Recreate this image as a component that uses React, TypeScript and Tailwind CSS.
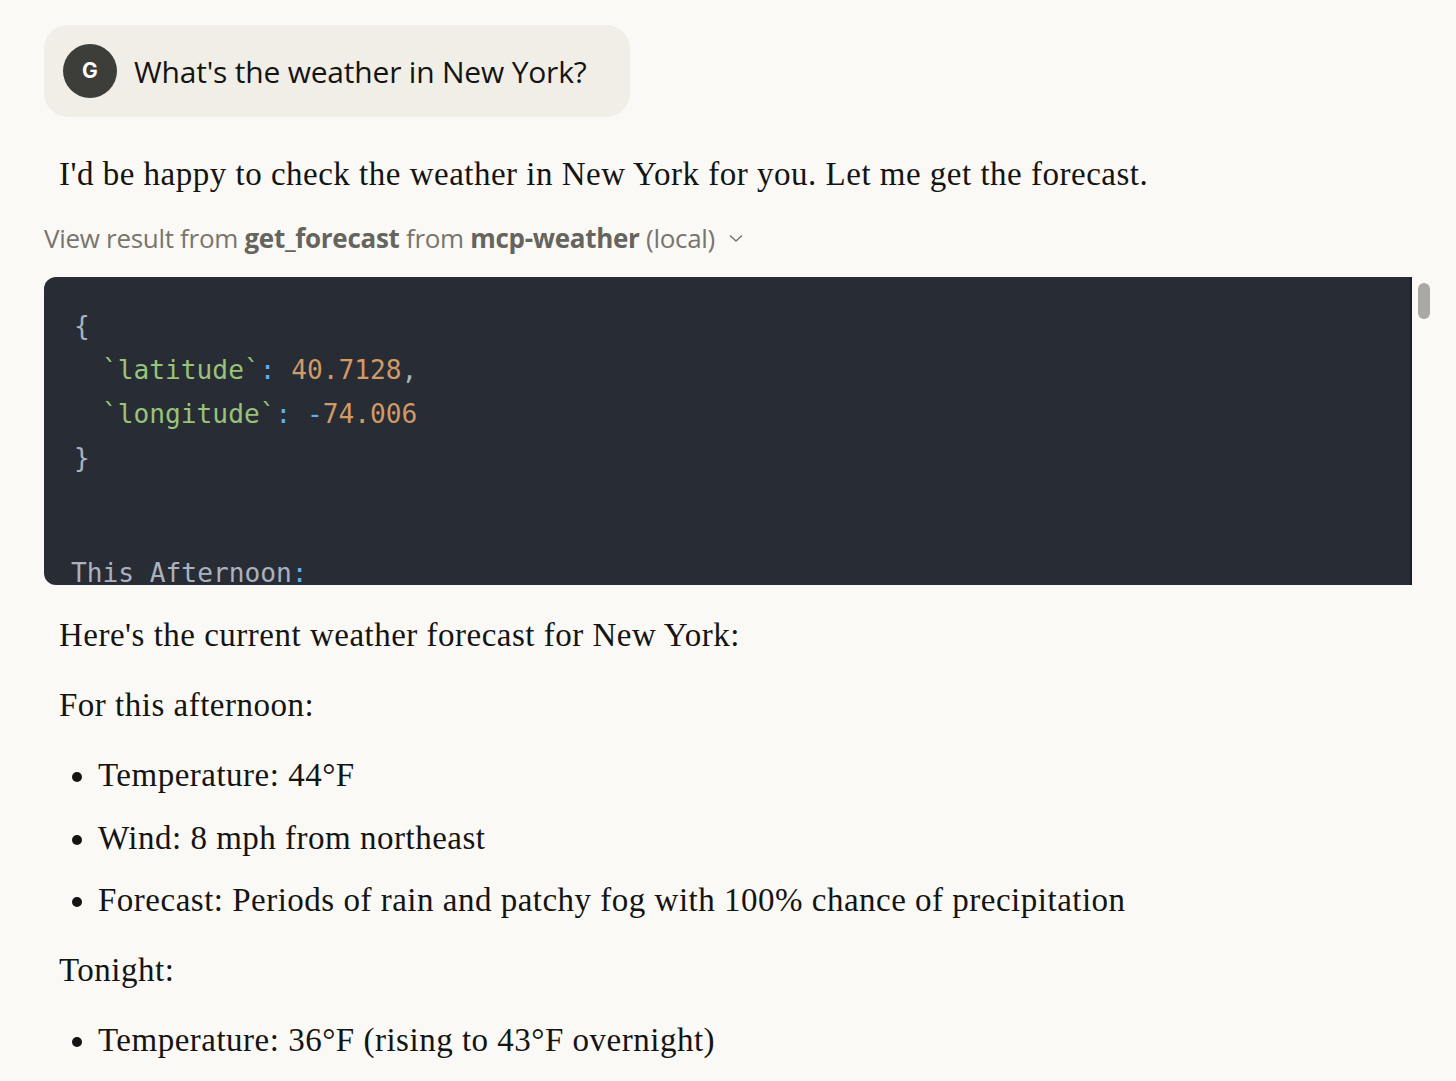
import React from "react";

const serif = { fontFamily: '"Liberation Serif", "DejaVu Serif", serif', letterSpacing: "0.5px" };

export default function App() {
  return (
    <div className="min-h-[1081px] w-full bg-[#faf9f5] pl-[44px] pr-[26px] pt-[25px]" style={serif}>
      {/* user bubble */}
      <div className="flex h-[92px] w-[586px] items-center gap-[17px] rounded-[24px] bg-[#f0eee6] pl-[19px]" style={{ letterSpacing: 0 }}>
        <div
          className="flex h-[54px] w-[54px] items-center justify-center rounded-full bg-[#3d3d3a] text-[21px] font-bold text-white"
          style={{ fontFamily: 'Inter, "Noto Sans", sans-serif' }}
        >
          G
        </div>
        <div
          className="text-[30px] text-[#141413]"
          style={{ fontFamily: '"Open Sans", Inter, sans-serif', letterSpacing: "-0.2px" }}
        >
          What's the weather in New York?
        </div>
      </div>

      <p className="mt-[37px] pl-[15px] text-[33px] leading-[40px] text-[#141413]">
        I'd be happy to check the weather in New York for you. Let me get the forecast.
      </p>

      <div
        className="mt-[29px] flex items-center gap-[12px] text-[26px] leading-[30px] text-[#77756e]"
        style={{ fontFamily: '"Open Sans", Inter, sans-serif', letterSpacing: "-0.3px" }}
      >
        <span>
          View result from <span className="font-bold text-[#66645e]">get_forecast</span> from{" "}
          <span className="font-bold text-[#66645e]">mcp-weather</span> (local)
        </span>
        <svg width="18" height="18" viewBox="0 0 18 18" fill="none" stroke="#77756e" strokeWidth="1.5">
          <path d="M3 6.5 L9 12 L15 6.5" />
        </svg>
      </div>

      <div className="relative mt-[24px] flex">
        <div
          className="h-[308px] w-[1368px] overflow-hidden rounded-l-[12px] border-r-2 border-[#1b1e24] bg-[#282c34] pl-[30px] pt-[27px] text-[26.2px] leading-[44px] text-[#abb2bf]"
          style={{ fontFamily: '"DejaVu Sans Mono", "Liberation Mono", monospace', letterSpacing: 0 }}
        >
          <div>{"{"}</div>
          <div className="pl-[28px]">
            <span className="text-[#98c379]">`latitude`</span>
            <span className="text-[#61afef]">:</span>{" "}
            <span className="text-[#d19a66]">40.7128</span>,
          </div>
          <div className="pl-[28px]">
            <span className="text-[#98c379]">`longitude`</span>
            <span className="text-[#61afef]">:</span>{" "}
            <span className="text-[#61afef]">-</span>
            <span className="text-[#d19a66]">74.006</span>
          </div>
          <div>{"}"}</div>
          <div className="-ml-[3px] mt-[71px]">
            This Afternoon<span className="text-[#61afef]">:</span>
          </div>
        </div>
        <div className="ml-[6px] mt-[6px] h-[36px] w-[12px] rounded-full bg-[#a9a8a5]" />
      </div>

      <div className="pl-[15px] text-[33px] text-[#141413]">
        <p className="mt-[30px] leading-[40px]">Here's the current weather forecast for New York:</p>
        <p className="mt-[30px] leading-[40px]">For this afternoon:</p>
        <ul className="mt-[30px] list-disc pl-[39px] marker:text-[#141413]">
          <li className="leading-[40px]">Temperature: 44°F</li>
          <li className="mt-[23px] leading-[40px]">Wind: 8 mph from northeast</li>
          <li className="mt-[22px] leading-[40px]">Forecast: Periods of rain and patchy fog with 100% chance of precipitation</li>
        </ul>
        <p className="mt-[30px] leading-[40px]">Tonight:</p>
        <ul className="mt-[30px] list-disc pl-[39px]">
          <li className="leading-[40px]">Temperature: 36°F (rising to 43°F overnight)</li>
        </ul>
      </div>
    </div>
  );
}
